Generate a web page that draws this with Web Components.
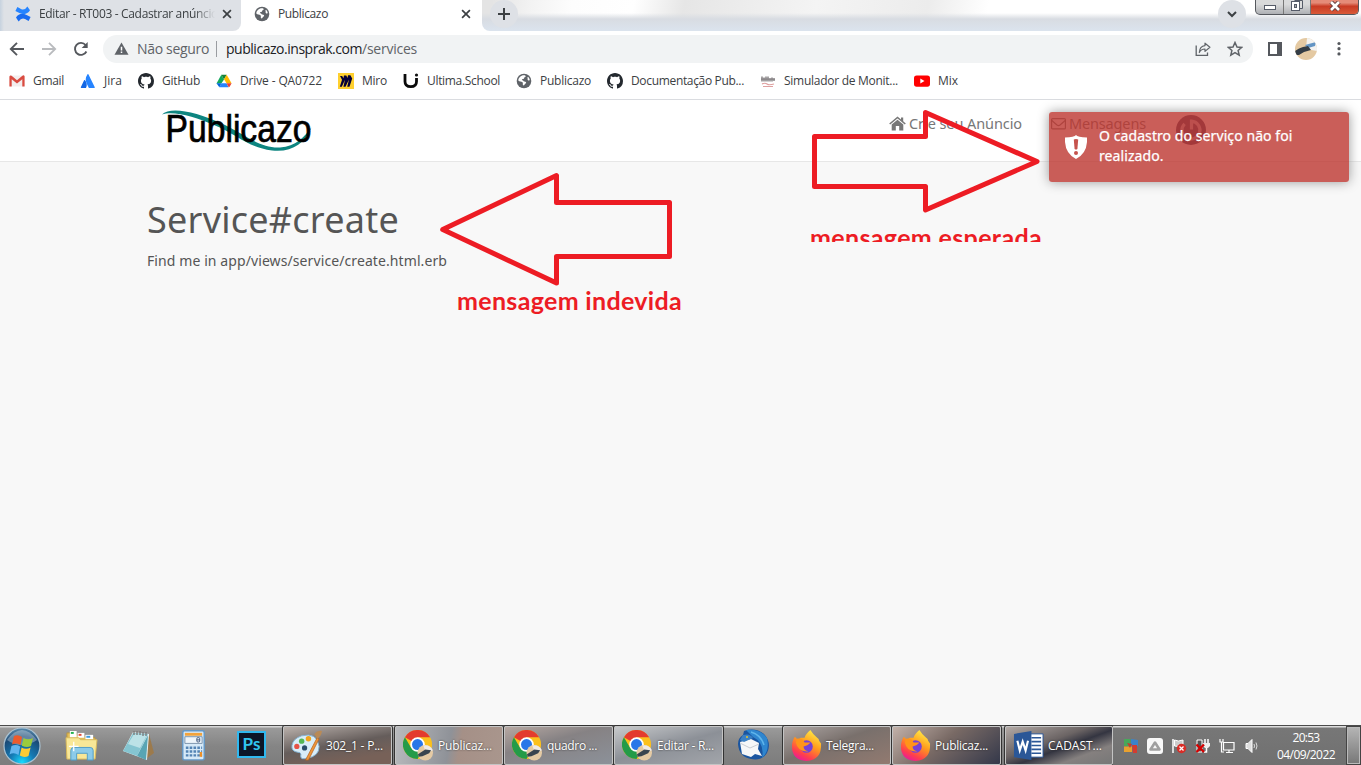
<!DOCTYPE html>
<html lang="pt-BR">
<head>
<meta charset="utf-8">
<title>Publicazo</title>
<style>
html,body{margin:0;height:765px;overflow:hidden;background:#f8f8f8}
body{display:flex;flex-direction:column;width:1361px;font:12px/16px "Open Sans","Noto Sans",sans-serif;color:#3c4043;position:relative}
</style>
</head>
<body>
<tab-strip></tab-strip>
<address-bar></address-bar>
<bookmark-bar>
<bookmark-item icon="gmail" w="31">Gmail</bookmark-item>
<bookmark-item icon="jira" w="18">Jira</bookmark-item>
<bookmark-item icon="github" w="38">GitHub</bookmark-item>
<bookmark-item icon="drive" w="82">Drive - QA0722</bookmark-item>
<bookmark-item icon="miro" w="25">Miro</bookmark-item>
<bookmark-item icon="ultima" w="73">Ultima.School</bookmark-item>
<bookmark-item icon="globe" w="51">Publicazo</bookmark-item>
<bookmark-item icon="github" w="113">Documentação Pub...</bookmark-item>
<bookmark-item icon="simul" w="114">Simulador de Monit...</bookmark-item>
<bookmark-item icon="youtube" w="20">Mix</bookmark-item>
</bookmark-bar>
<site-page></site-page>
<task-bar></task-bar>
<toast-message>O cadastro do serviço não foi<br>realizado.</toast-message>
<paint-notes></paint-notes>
<script>
const ICONS = {
confluence:['0 0 16 16','<path d="M1 11.6 3.6 15.6Q6.5 11.2 10 13L13.6 14.9 15.6 10.9 11.6 9Q4.800 5.800 1 11.600Z" fill="#1a6cf0"/><path d="M15 4.300 12.400.4Q9.500 4.800 6 3L2.400 1.100.4 5.100 4.400 7Q11.200 10.200 15 4.300Z" fill="#2684ff"/>'],
globe:['0 0 16 16','<circle cx="8" cy="8" r="7.300" fill="#5f6368"/><path d="M2.300 7.600C3.600 9 5.300 8.300 6.500 9.300 7.600 10.300 6 11.400 7.300 12.300 8.200 13 8.400 11.300 9.600 10.600 10.800 9.900 10 8.600 8.300 8.600 7.200 8.600 7.700 7.400 6.400 7.300 5.500 7.200 6 6 7 6.100 8.600 6.200 7.600 4.600 9 4.100 10.400 3.600 9.400 2.500 8.700 2.200 5 1.800 2.400 4.500 2.300 7.600Z" fill="#fff"/><path d="M11.300 4.800C12.200 5.500 11 6.600 12 7.200 12.700 7.600 13.300 7.300 13.800 7.200 13.600 5.700 13 4.600 12 3.700Z" fill="#fff"/>'],
close:['0 0 10 10','<path d="M1.100 1.100 8.900 8.900M8.900 1.100 1.100 8.900" stroke="#3c4043" stroke-width="1.700" fill="none"/>'],
plus:['0 0 14 14','<path d="M7 1V13M1 7H13" stroke="#3c4043" stroke-width="2" fill="none"/>'],
chevron:['0 0 12 12','<path d="M2 4 6 8 10 4" stroke="#3c4043" stroke-width="2" fill="none"/>'],
back:['0 0 16 16','<path d="M15 8H2M8 1.800 1.800 8 8 14.200" stroke="#55585d" stroke-width="1.900" fill="none"/>'],
forward:['0 0 16 16','<path d="M1 8H14M8 1.800 14.200 8 8 14.200" stroke="#b9bbbe" stroke-width="1.800" fill="none"/>'],
reload:['0 0 16 16','<path d="M13.400 10.500A6 6 0 1 1 12.600 4" stroke="#55585d" stroke-width="1.900" fill="none"/><path d="M14.700 1V7H8.700Z" fill="#55585d"/>'],
warn:['0 0 16 14','<path d="M8 .5 15.500 13.500H.5Z" fill="#5f6368"/><path d="M7.200 5h1.600v4H7.200zM7.200 10h1.600v1.600H7.200z" fill="#fff"/>'],
share:['0 0 16 16','<path d="M1.200 4.500V14.400H12.500V11.500" stroke="#5f6368" stroke-width="1.300" fill="none"/><path d="M10 2.200 14.900 6.300 10 10.400V8C7.500 8 5.500 9 4.300 11.500 4.500 7.500 6.500 5 10 4.600Z" stroke="#5f6368" stroke-width="1.200" fill="none" stroke-linejoin="round"/>'],
star:['0 0 16 16','<path d="M8 1.500 10 6 14.700 6.400 11.100 9.500 12.200 14.200 8 11.700 3.800 14.200 4.900 9.500 1.300 6.400 6 6Z" stroke="#5f6368" stroke-width="1.500" fill="none"/>'],
panel:['0 0 14 14','<path d="M0 0H14V14H0ZM2 2V12H9V2Z" fill="#55585d" fill-rule="evenodd"/>'],
avatar:['0 0 22 22','<clipPath id="a"><circle cx="11" cy="11" r="11"/></clipPath><g clip-path="url(#a)"><path d="M0 0H22V22H0Z" fill="#e4c9a2"/><path d="M12 0H22V13L11 11Z" fill="#f4f3f1"/><path d="M10 7 21 4 20 8 13 10Z" fill="#6495c4"/><path d="M0 13Q4 10 8 9L13 8 16 12 9 14 4 17 0 17Z" fill="#343d45"/></g>'],
dots:['0 0 4 16','<g fill="#55585d"><circle cx="2" cy="2.500" r="1.600"/><circle cx="2" cy="7.700" r="1.600"/><circle cx="2" cy="12.900" r="1.600"/></g>'],
gmail:['0 0 16 16','<path d="M1.200 2.500H14.800V13.500H1.200Z" fill="#f3eeee"/><path d="M.4 3.500V13.500H2.700V6.200L8 10.500 13.300 6.200V13.500H15.600V3.200Q14.800 1.700 13.400 2.800L8 7.300 2.600 2.800Q1.200 1.700.4 3.500Z" fill="#d94b40"/>'],
jira:['0 0 16 16','<path d="M4.800 7.100Q4.400 6.700 4.100 7.300L.8 14.200Q.7 15 1.400 15H6Q8 10.700 4.800 7.100Z" fill="#1467e4"/><path d="M7.500 1.200Q4.300 6.200 6.700 10.600L8.900 15H14Q15.200 15 14.800 14.200L8.400 1.300Q8 .6 7.500 1.200Z" fill="#2684ff"/>'],
github:['0 0 16 16','<path fill="#24292f" d="M8 0C3.580 0 0 3.580 0 8c0 3.540 2.290 6.530 5.470 7.590.4.070.55-.17.55-.38 0-.19-.01-.82-.01-1.490-2.010.37-2.530-.49-2.690-.94-.09-.23-.48-.94-.82-1.130-.28-.15-.68-.52-.01-.53.63-.01 1.080.58 1.230.82.72 1.210 1.870.87 2.330.66.070-.52.28-.87.51-1.070-1.780-.2-3.640-.89-3.640-3.950 0-.87.31-1.590.82-2.150-.08-.2-.36-1.020.08-2.120 0 0 .67-.21 2.200.82.64-.18 1.320-.27 2-.27s1.360.09 2 .27c1.530-1.040 2.200-.82 2.200-.82.44 1.100.16 1.920.08 2.120.51.56.82 1.270.82 2.150 0 3.070-1.870 3.750-3.650 3.950.29.25.54.73.54 1.480 0 1.070-.01 1.930-.01 2.200 0 .21.15.46.55.38A8.010 8.010 0 0 0 16 8c0-4.420-3.580-8-8-8z"/>'],
drive:['0 0 16 16','<path d="M5.300 1.700 8 6.400 5.500 10.200.5 10.500Z" fill="#11a85b"/><path d="M5.300 1.700H10.700L8 6.400Z" fill="#188038"/><path d="M10.700 1.700 15.500 10.200H10.500L8 6.200Z" fill="#ffba00"/><path d="M5.500 10.200H10.500L12.500 14.300H3.300Z" fill="#2684fc"/><path d="M10.500 10.200H15.600L13.600 13.700 12.700 14.300Z" fill="#ea4335"/><path d="M.5 10.200H5.500L3.300 14.300Z" fill="#0066da"/>'],
miro:['0 0 16 16','<path d="M0 0H16V16H0Z" fill="#ffd02f"/><path d="M2 3H4.200L5.400 5.300 6 2.600H8.300L9.500 5 10 2.200H12.400L14.200 5.500 11.500 13.800H9.200L11 6.500 7.500 13.800H5.400L7 6.800 3.800 13.800H1.800L4 6.800Z" fill="#050038"/>'],
ultima:['0 0 16 16','<path d="M2 1V8.500Q2 13.700 7.800 13.700 13.500 13.700 13.500 8.500V5" stroke="#0a0a0a" stroke-width="2.800" fill="none"/><circle cx="13.500" cy="2" r="1.600" fill="#111"/>'],
simul:['0 0 16 16','<path d="M2 3.500V8.500M4 4.500V8.500M6 3.500V8.500M8 3.500V8.500M10 5.500V8.500M12 4.500V8.500M14 5.500V8" stroke="#5e5a5c" stroke-width="1.100" fill="none"/><path d="M1 6.200H15" stroke="#8d898b" stroke-width="1.800"/><path d="M2 11Q5 9.500 7 11T14 11M3 13.500H13" stroke="#dfa0a0" stroke-width="1.200" fill="none"/>'],
youtube:['0 0 16 16','<rect y="2.500" width="16" height="11.200" rx="2.600" fill="#f00"/><path d="M6.300 5.600V10.600L10.500 8.100Z" fill="#fff"/>'],
home:['0 0 17 15','<path d="M8.500 3.800 14.300 8.600V14.500H10.200V10H6.800V14.500H2.700V8.600Z" fill="#777"/><path d="M.7 8 8.500 1.500 16.300 8" stroke="#777" stroke-width="1.600" fill="none"/><path d="M12 1.500H14.200V6L12 4Z" fill="#777"/>'],
mail:['0 0 15 13','<rect x=".6" y="1.600" width="13.800" height="10.300" rx="1" fill="none" stroke="#777" stroke-width="1.200"/><path d="M.8 3.500 6 8Q7.500 9.100 9 8L14.200 3.500" stroke="#777" stroke-width="1.200" fill="none"/>'],
power:['0 0 30 30','<circle cx="15" cy="15" r="15" fill="#3e4165"/><path d="M15.500 14.500V6.200A9 9 0 1 1 8.600 8.800" stroke="#b9b4c0" stroke-width="3.200" fill="none"/>'],
shield:['0 0 22 24','<path d="M11 0Q12.500 2.300 22 2.500 23 18 11 24-1 18 0 2.500 9.500 2.300 11 0Z" fill="#fff"/><path d="M8.800 4.600Q11 3.200 13.200 4.600L12.400 14Q11 15 9.600 14Z" fill="#c6534d"/><circle cx="11" cy="18" r="2" fill="#c6534d"/>'],
orb:['0 0 38 38','<defs><radialGradient id="o" cx=".5" cy=".95" r=".95"><stop offset="0" stop-color="#17dcff"/><stop offset=".35" stop-color="#157ab4"/><stop offset=".75" stop-color="#1b4a76"/><stop offset="1" stop-color="#5c8cae"/></radialGradient></defs><circle cx="19" cy="19" r="18" fill="url(#o)" stroke="#a9c2d2" stroke-width="1.200"/><path d="M4 13Q19-7 34 13 27 18 19 18T4 13Z" fill="#fff" opacity=".32"/><path d="M11 9Q15 7 19 10L17.500 18Q13 15.500 9 17.500Z" fill="#ed5b2c"/><path d="M20.500 11Q25 13.500 30 11L28 19Q24 21 18.800 18.700Z" fill="#9bcb3c"/><path d="M8.500 19Q13 17 17.200 19.500L15.500 28Q11 25 6.500 27.500Z" fill="#63b5ee"/><path d="M18.600 20.500Q23 23 27.600 20.500L25.500 29Q21 31 16.800 28.500Z" fill="#fecb34"/>'],
folder:['0 0 34 32','<path d="M2 3H11L13 6H19L21 8H31V29H2Z" fill="#e2bd58" stroke="#b99743"/><path d="M5 1H12V8H5Z" fill="#fff"/><path d="M6 2H9V4H6Z" fill="#22b14c"/><path d="M13 3H20V8H13Z" fill="#fff"/><path d="M14 4H17V6H14Z" fill="#e34b36"/><path d="M21 5H29V10H21Z" fill="#fff"/><path d="M22 6H26V8H22Z" fill="#3d9bdd"/><path d="M1 8H14L16 10H33L31 30H2Z" fill="#f8e797" stroke="#d7b95e"/><path d="M6 31V21Q6 18 9 18H26Q29 18 29 21V31H23V24H12V31Z" fill="#8ccbe9" stroke="#4f9dc8"/><path d="M9 12V22M4 17H14" stroke="#fff" stroke-width="1.300"/>'],
notepad:['0 0 32 32','<path d="M27 4 32 23 24 29Z" fill="#9c7a4c"/><path d="M11 2 27 4 25 30 1 21Z" fill="#eaf3f5"/><path d="M11 3 26 4 15 26 1 21Z" fill="#85c5d1"/><path d="M12 4 25 5 18 18 6 14Z" fill="#bce2e7"/><path d="M26 5 15 26 24 30Z" fill="#59a5b4"/><path d="M12 1V5M15 1V5M18 1V5M21 2V6M24 2V6" stroke="#777" stroke-width="1.300"/>'],
calc:['0 0 24 32','<rect x=".8" y=".8" width="22.400" height="30.400" rx="2" fill="#d6e9f7" stroke="#6498c7" stroke-width="1.500"/><path d="M3 3H21V6H3Z" fill="#f2a33b"/><path d="M3 7H21V14H3Z" fill="#eef5fa" stroke="#7b93ac"/><rect x="15.500" y="8" width="3" height="4.500" rx="1" fill="none" stroke="#41597d"/><path d="M15.500 10.300H18.500" stroke="#41597d"/><path d="M4 18.500H21M4 22.500H21M4 26.500H21" stroke="#5484b4" stroke-width="2.500" stroke-dasharray="2.700 1.300"/><path d="M18.500 23H21V28H18.500Z" fill="#ed9028"/>'],
paint:['0 0 32 32','<path d="M11 6Q27 2 29 17 29 27 17 29 10 31 10 27 11 23 7 23 0 22 1 16 2 9 11 6Z" fill="#d8edf8" stroke="#83b3d4"/><circle cx="6" cy="17" r="2.700" fill="#e65246"/><circle cx="11" cy="11.500" r="2.800" fill="#53b754"/><circle cx="18" cy="9" r="2.800" fill="#f1a31e"/><circle cx="14" cy="18.500" r="2.700" fill="#294c69"/><path d="M27 8 29 9 18 31 15 31Z" fill="#ee963b" stroke="#b86823" stroke-width=".8"/><path d="M24 4Q27 0 32 1 31 7 27 9Z" fill="#b98a56"/>'],
chrome:['0 0 32 32','<circle cx="15" cy="15" r="15" fill="#fbc11c"/><path d="M15 15 2 7.500A15 15 0 0 1 28 7.500H15Z" fill="#e33b2e"/><path d="M2 7.500A15 15 0 0 0 15 30L21.500 18.700 15 15 8.600 18.800Z" fill="#249b48"/><circle cx="15" cy="15" r="7.500" fill="#fff"/><circle cx="15" cy="15" r="5.700" fill="#2876e8"/><g><circle cx="23" cy="23.500" r="8" fill="#e4caa4"/><path d="M21 16Q28 15 30.800 21L24 24Z" fill="#eeeae5"/><path d="M15.500 25 23 20 29 21 27 24 20 27 16 27.500Z" fill="#39454f"/></g>'],
thunder:['0 0 32 32','<path d="M7 2Q18-2 27 5 35 14 30 24 25 32 14 30 2 28 1 15 1 9 6 6Z" fill="#1a55a0"/><path d="M9 1Q23-1 30 9 33 22 25 29 28 14 16 8Z" fill="#2f86cf"/><path d="M14 3Q24 6 27 16" stroke="#5fb4ea" stroke-width="1.500" fill="none"/><path d="M3 13 14 10 22 14 21 20 25 27 18 25 14 28 5 25Z" fill="#f6f7f8"/><path d="M3 14 13 19 22 15" stroke="#c9cdd3" fill="none"/><path d="M6 6Q13 4 16 9L7 13 3 11Z" fill="#3b80c3"/><circle cx="10" cy="8" r="1" fill="#eac42d"/>'],
firefox:['0 0 32 32','<defs><linearGradient id="f" x1=".8" y1="0" x2=".3" y2="1"><stop offset="0" stop-color="#fff34a"/><stop offset=".45" stop-color="#ff9b1d"/><stop offset=".8" stop-color="#ff3e4d"/><stop offset="1" stop-color="#e8199d"/></linearGradient></defs><path d="M20 0Q23 5 27 8 29 9 29 11L31 14Q32 31 16 32 1 31 1 17 1 11 4 7L7 10 10 8H14Q15 4 20 0Z" fill="url(#f)"/><circle cx="16" cy="17" r="6.500" fill="#7542d5"/><path d="M6 9Q12 8 14 13H20Q18 16 13 17 13 21 18 22 7 23 5 13Z" fill="#ff9419"/>'],
word:['0 0 32 32','<path d="M17 4H31V28H17Z" fill="#fff" stroke="#2b5797"/><path d="M19 8H29M19 12H29M19 16H29M19 20H29M19 24H29" stroke="#2b5797" stroke-width="1.700"/><path d="M1 4 19 1V31L1 28Z" fill="#2b5797"/><path d="M4.500 11 7 21 10 12 13 21 15.500 11" stroke="#fff" stroke-width="2.200" fill="none"/>'],
tray1:['0 0 16 16','<path d="M1 1H7.500V8H1Z" fill="#47a85a"/><path d="M8 1 15 2V8H8Z" fill="#3b83ca"/><path d="M1 8.500H9V14H1Z" fill="#e9a12f"/><path d="M9 7H14V15H10Z" fill="#d33c31"/><path d="M4 5 9 6 7 10Z" fill="#c43d2f"/>'],
tray2:['0 0 16 16','<rect width="16" height="16" rx="3" fill="#f8f8f8"/><path d="M8 4.500 12.500 11.500H3.500Z" stroke="#a0a0a0" stroke-width="2.600" fill="none" stroke-linejoin="round"/>'],
tray3:['0 0 16 16','<path d="M2 1V15" stroke="#fff" stroke-width="1.500"/><path d="M3.500 2Q7 4 12 2V8Q7 9 3.500 8Z" fill="#ccc" stroke="#fff"/><circle cx="10.500" cy="10.500" r="4.700" fill="#d92c26"/><path d="M8.500 8.500 12.500 12.500M12.500 8.500 8.500 12.500" stroke="#fff" stroke-width="1.300"/>'],
tray4:['0 0 16 16','<path d="M2 14V2H7V14Z" stroke="#fff" fill="#555"/><path d="M10 1V5M13 1V5" stroke="#fff" stroke-width="1.500"/><path d="M8 5H15V8L13 10H10L8 8Z" fill="#eee"/><path d="M11.500 10V14H9" stroke="#fff" stroke-width="1.500" fill="none"/><path d="M1.500 6.500 9 14M9 6.500 1.500 14" stroke="#d60000" stroke-width="2.400"/>'],
tray5:['0 0 16 16','<path d="M4.500 4.500H15V12H4.500ZM10 12V14M7 14.500H14" stroke="#fff" stroke-width="1.200" fill="#777"/><path d="M1 1V4H4V1M2.500 4V14H5" stroke="#fff" stroke-width="1.200" fill="none"/>'],
tray6:['0 0 16 16','<path d="M3 5.500H5L9 1.500V14.500L5 10.500H3Z" fill="#ddd" stroke="#fff"/><path d="M11 6Q12 8 11 10M13 4.500Q15 8 13 11.500" stroke="#ddd" fill="none"/>']
};
function define(name, css, html, setup) {
  const t = document.createElement('template');
  t.innerHTML = '<style>' + css + '</style>' + (html || '');
  customElements.define(name, class extends HTMLElement {
    connectedCallback() {
      if (this.shadowRoot) return;
      this.attachShadow({mode: 'open'}).append(t.content.cloneNode(true));
      if (setup) setup(this, this.shadowRoot);
    }
  });
}

define('tab-strip', `
:host{display:flex;height:31px;flex:none;background:#fff}
.tab{display:flex;align-items:center;height:28px;padding-bottom:3px;box-sizing:content-box}
.one{padding-left:15px;width:226px;background:linear-gradient(90deg,#c6d2df,#dee1e6 4px);border-bottom-right-radius:8px}
.wrap{background:#fff;display:flex}
.one ui-icon{margin-right:8px}
.one .t{width:177px;overflow:hidden;height:16px;-webkit-mask:linear-gradient(90deg,#000 155px,transparent 176px)}
.one .x{margin:0 0 0 6px}
.two{padding-left:13px;width:228px;background:#fff}
.two ui-icon{margin-right:8px}.two .x{margin:0 11px 0 auto}
.glass{flex:1;display:flex;align-items:flex-start;border-bottom-left-radius:8px;background:linear-gradient(#fff0 13px,#d8dce2 19px,#dbe3ed 30px),linear-gradient(100deg,#e4e4e4 10px,#f3f3f3 50px,#fdfdfd 90px,#fff 150px,#e6e6e6 200px,#f4f4f4 330px,#ececec 440px,#fff 500px,#fff)}
.round{width:28px;height:28px;border-radius:14px;background:#dee1e6;display:flex;align-items:center;justify-content:center;margin-left:8px}
.drop{margin-left:700px}
.win{display:flex;margin-left:9px;height:14px;border:1px solid #55585d;border-top:0;border-radius:0 0 5px 5px;overflow:hidden;background:linear-gradient(#d9dadb 30%,#aeb0b4)}
.win div{width:27px;display:flex;align-items:center;justify-content:center;border-right:1px solid #777}
.win .m{align-items:flex-start;padding-top:3px;height:11px}
.win .s{width:26px;align-items:flex-start}
.win .r{width:47px;border:0;background:linear-gradient(#e58b78 20%,#c93b24 45%,#d95a38)}
`, `<div class="wrap"><div class="tab one"><ui-icon name="confluence" w="16"></ui-icon><div class="t"><fit-text w="179">Editar - RT003 - Cadastrar anúncio</fit-text></div><ui-icon class="x" name="close" w="10"></ui-icon></div>
<div class="tab two"><ui-icon name="globe" w="16"></ui-icon><fit-text w="50">Publicazo</fit-text><ui-icon class="x" name="close" w="10"></ui-icon></div></div>
<div class="glass"><div class="round"><ui-icon name="plus" w="14"></ui-icon></div><div class="round drop"><ui-icon name="chevron" w="12"></ui-icon></div>
<div class="win"><div class="m"><svg width="14" height="8"><rect x="1.500" y="2.500" width="11" height="4" fill="#fff" stroke="#555b68"/></svg></div><div class="s"><svg width="12" height="12"><path d="M3.500.5H11.500V8.500H9" fill="#ddd" stroke="#555b68"/><rect x=".500" y="1.500" width="8" height="9" fill="#fff" stroke="#555b68"/><rect x="3.500" y="4.500" width="2" height="3" fill="#aaa" stroke="#555b68"/></svg></div><div class="r"><svg width="14" height="12"><path d="M3 1 11 9M11 1 3 9" stroke="#613c3c" stroke-width="4.500"/><path d="M3 1 11 9M11 1 3 9" stroke="#fff" stroke-width="2.600"/></svg></div></div></div>`);

define('address-bar', `
:host{display:flex;height:36px;flex:none;background:#fff;align-items:center;box-sizing:border-box;padding-left:9px}
.f{margin-left:16px}.r{margin-left:16px}
.omni{margin-left:14px;width:1150px;height:28px;border-radius:14px;background:#f1f3f4;display:flex;align-items:center;box-sizing:border-box;padding-left:11px;font-size:14px;color:#5f6368}
.omni .n{margin-left:8px}.sep{width:1px;height:16px;background:#9a9da1;margin:0 9px 0 7px}.u{color:#202124}
.sh{margin-left:auto}.st{margin:0 10px 0 16px}
.p{margin-left:15px}.a{margin-left:13px}.d{margin-left:20px}
`, `<ui-icon name="back" w="16"></ui-icon><ui-icon class="f" name="forward" w="16"></ui-icon><ui-icon class="r" name="reload" w="16"></ui-icon>
<div class="omni"><ui-icon name="warn" w="15"></ui-icon><fit-text class="n" w="72">Não seguro</fit-text><div class="sep"></div><fit-text class="u" w="136">publicazo.insprak.com</fit-text><fit-text w="55">/services</fit-text><ui-icon class="sh" name="share" w="16"></ui-icon><ui-icon class="st" name="star" w="16"></ui-icon></div>
<ui-icon class="p" name="panel" w="14"></ui-icon><ui-icon class="a" name="avatar" w="22"></ui-icon><ui-icon class="d" name="dots" w="4"></ui-icon>`);

define('bookmark-bar', `:host{display:flex;gap:16px;flex:none;background:#fff;border-bottom:1px solid #dadce0;align-items:center;padding:0 0 4px 9px;box-sizing:border-box;height:33px}`, '<slot></slot>');
define('bookmark-item', ':host{display:flex;gap:8px;align-items:center;flex:none;font-size:12px}', '<ui-icon w="16"></ui-icon><fit-text></fit-text>', (h, s) => {
  s.querySelector('ui-icon').setAttribute('name', h.getAttribute('icon'));
  const f = s.querySelector('fit-text'); f.setAttribute('w', h.getAttribute('w')); f.textContent = h.textContent;
});

define('site-logo', ':host{display:block;width:152px;height:42px}', `<svg width="152" height="42" viewBox="0 0 152 42"><path d="M0 4.500C8-4 34 1.500 60 13.500 84 25 98 38.500 118 37.500 134 36.500 142 27 149.500 17.500 142 34 130 42.500 110 40.500 86 37.500 76 25 52 15 34 7.500 12 .5 0 4.500Z" fill="#0d8580"/><text x="3.500" y="31.500" font-family="Liberation Sans,sans-serif" font-size="38" textLength="146" lengthAdjust="spacingAndGlyphs" fill="#000" stroke="#000" stroke-width=".7">Publicazo</text></svg>`);
define('site-page', `
:host{display:block;flex:1;background:#f8f8f8;color:#555;font-family:"Noto Sans",sans-serif}
header{display:flex;height:61px;background:#fff;border-bottom:1px solid #e7e7e7;align-items:flex-start;color:#777;font-size:14.500px;line-height:20px}
site-logo{margin:10px 0 0 162px}
nav{display:flex;margin:13px 0 0 575px}
nav>*{flex:none}nav ui-icon{margin-top:3px}
.c{margin-left:3px}.m{margin:4px 3px 0 29px!important}.p{margin:2px 0 0 30px!important}
main{padding:35px 0 0 147px;display:flex;flex-direction:column;align-items:flex-start}
.h{font:36px/46px "Noto Sans",sans-serif}.d{font-size:14px;line-height:20px;margin-top:8px}
`, `<header><site-logo></site-logo><nav><ui-icon name="home" w="17"></ui-icon><fit-text class="c" w="113">Crie seu Anúncio</fit-text><ui-icon class="m" name="mail" w="15"></ui-icon><fit-text w="77">Mensagens</fit-text><ui-icon class="p" name="power" w="30"></ui-icon></nav></header>
<main><fit-text class="h" w="252">Service#create</fit-text><fit-text class="d" w="300">Find me in app/views/service/create.html.erb</fit-text></main>`);

define('toast-message', `:host{position:absolute;left:1049px;top:112px;width:300px;height:70px;box-sizing:border-box;padding:14px 0 0 16px;display:flex;border-radius:3px;background:rgba(189,54,47,.8);box-shadow:0 0 12px #999;color:#fff;font:14px/20px "Noto Sans",sans-serif}
.s{margin:9px 12px 0 0}p{margin:0;letter-spacing:.08px;-webkit-text-stroke:.25px #fff}`, '<ui-icon class="s" name="shield" w="22"></ui-icon><p><slot></slot></p>');

define('paint-notes', `:host{position:absolute;left:0;top:0;width:1361px;height:725px;color:#ed1c24;font:bold 25px/32px Lato,sans-serif}
svg{position:absolute;left:0;top:0}.a{position:absolute;left:457px;top:284px}.b{position:absolute;left:810px;top:221px;height:21px;overflow:hidden}`,
`<svg width="1361" height="725" fill="none" stroke="#ed1c24" stroke-width="5" stroke-linejoin="round"><path d="M814.500 136.500H925.500V112.500L1037 161.500 925.500 210V186.500H814.500Z"/><path d="M442.700 229.500 556.500 175.500V202.500H669.500V256.500H556.500V283Z"/></svg>
<fit-text class="a" w="225">mensagem indevida</fit-text><div class="b"><fit-text w="232">mensagem esperada</fit-text></div>`);

define('task-bar', `
:host{display:flex;height:40px;flex:none;box-sizing:border-box;border-top:1px solid #4b4b4b;background:linear-gradient(#d6d6d6 1px,#9a9a9a 2px,#858585 20px,#7d7d7d);color:#fff;align-items:stretch}
.q{display:flex;align-items:center;flex:none;width:283px}
.q>*{flex:none}.q .o{margin-left:3px}.q .fo{margin-left:24px}.q .no{margin-left:24px}.q .ca{margin-left:28px}
.ps{margin-left:32px;width:25px;height:23px;border:2px solid #30b8ef;background:#0c1527;color:#31c5f0;font:bold 17px/22px Lato,sans-serif;text-align:center;margin-bottom:3px}
task-button{margin-right:1px}.g{margin-left:2px}.g3{margin-left:3px}
.th{margin:3px 14px 0 13px}
.tray{display:flex;width:233px;flex:none;align-items:center;background:linear-gradient(#ddd 1px,#777 2px,#707070)}
.tray ui-icon{margin-right:8px}.tray ui-icon:first-child{margin-left:10px}
.clock{display:flex;flex-direction:column;align-items:center;line-height:17px;width:60px;margin-left:9px;font-size:12px}
.desk{flex:1;border:1px solid #444;box-shadow:inset 0 0 0 1px #bbb;background:linear-gradient(#b5b5b5,#777)}
`, `<div class="q"><ui-icon class="o" name="orb" w="38"></ui-icon><ui-icon class="fo" name="folder" w="33"></ui-icon><ui-icon class="no" name="notepad" w="32"></ui-icon><ui-icon class="ca" name="calc" w="23"></ui-icon><div class="ps">Ps</div></div>
<task-button icon="paint" w="57" style="--bg:linear-gradient(170deg,#b9b0ab,#655d5b 48%,#776158 80%)">302_1 - P...</task-button>
<task-button class="g" icon="chrome" w="54" style="--bg:linear-gradient(100deg,#b8babd,#8f9298 50%,#a59087 60%,#a9968d);width:108px">Publicaz...</task-button>
<task-button icon="chrome" w="50" style="--bg:linear-gradient(165deg,#b6a8a2,#868284 40%,#8c9199)">quadro ...</task-button>
<task-button icon="chrome" w="57" style="--bg:linear-gradient(165deg,#c7c9cb,#8c9097 50%,#a2a5aa)">Editar - R...</task-button>
<ui-icon class="th" name="thunder" w="32"></ui-icon>
<task-button icon="firefox" w="48" style="--bg:linear-gradient(160deg,#aea7a5,#79706c 45%,#927a70);width:108px">Telegra...</task-button>
<task-button icon="firefox" w="53" style="--bg:linear-gradient(140deg,#c2b1a9,#796a65 45%,#34384a)">Publicaz...</task-button>
<task-button class="g3" icon="word" w="54" style="--bg:linear-gradient(160deg,#b3aaa6,#6b6464 40%,#343541 55%,#85807f 75%,#777);margin-right:0;width:108px">CADAST...</task-button>
<div class="tray"><ui-icon name="tray1" w="16"></ui-icon><ui-icon name="tray2" w="16"></ui-icon><ui-icon name="tray3" w="16"></ui-icon><ui-icon name="tray4" w="16"></ui-icon><ui-icon name="tray5" w="16"></ui-icon><ui-icon name="tray6" w="16"></ui-icon><div class="clock"><fit-text w="27">20:53</fit-text><fit-text w="58">04/09/2022</fit-text></div></div><div class="desk"></div>`);
define('task-button', `:host{display:flex;flex:none;width:109px;box-sizing:border-box;align-items:center;gap:4px;padding-left:7px;border:1px solid #c4c4c4;border-radius:2px;background:var(--bg);box-shadow:0 0 0 1px #333;font-size:12px;text-shadow:0 0 2px #222}`, '<ui-icon w="31"></ui-icon><fit-text></fit-text>', (h, s) => {
  s.querySelector('ui-icon').setAttribute('name', h.getAttribute('icon'));
  const f = s.querySelector('fit-text'); f.setAttribute('w', h.getAttribute('w')); f.textContent = h.textContent;
});

define('ui-icon', ':host{display:block;flex:none}svg{display:block}', '', (h, s) => {
  const [box, art] = ICONS[h.getAttribute('name')];
  const [, , bw, bh] = box.split(' ').map(Number), w = +h.getAttribute('w');
  const d = document.createElement('div');
  d.innerHTML = `<svg width="${w}" height="${w * bh / bw}" viewBox="${box}">${art}</svg>`;
  s.append(d);
});
/* Tracks its text in or out until the line is w pixels wide. */
define('fit-text', ':host{display:inline-block;flex:none;white-space:pre}', '<slot></slot>', h => {
  const w = +h.getAttribute('w');
  if (w) h.style.letterSpacing = (w - h.getBoundingClientRect().width) / h.textContent.length + 'px';
});
</script>
</body>
</html>
